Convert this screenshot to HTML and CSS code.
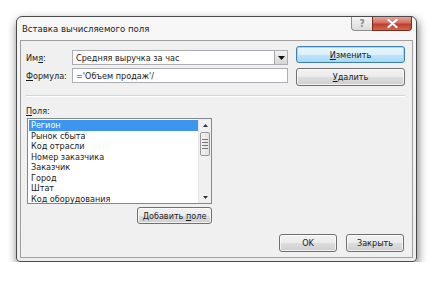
FILE: index.html
```html
<!DOCTYPE html>
<html lang="ru">
<head>
    <meta charset="UTF-8">
    <title>Вставка вычисляемого поля</title>
    <link rel="stylesheet" href="styles.css">
</head>
<body>
    <div class="window">

        <div class="titlebar">
            <span class="title">Вставка вычисляемого поля</span>
            <div class="caption-buttons">
                <span class="help">?</span>
                <span class="close">
                    <svg width="11" height="9" viewBox="0 0 11 9">
                        <path d="M1.5 1 L9.5 8 M9.5 1 L1.5 8" stroke="#fff" stroke-width="2.2" stroke-linecap="round"/>
                    </svg>
                </span>
            </div>
        </div>

        <div class="content">
            <div class="top">
                <div class="fields">
                    <div class="row">
                        <label>Им<u>я</u>:</label>
                        <div class="input combo">
                            <span>Средняя выручка за час</span>
                            <span class="drop">
                                <svg width="7" height="4" viewBox="0 0 7 4"><path d="M0 0 H7 L3.5 4 Z" fill="#111"/></svg>
                            </span>
                        </div>
                    </div>
                    <div class="row">
                        <label><u>Ф</u>ормула:</label>
                        <div class="input">='Объем продаж'/</div>
                    </div>
                </div>
                <div class="side-buttons">
                    <button class="btn default"><u>И</u>зменить</button>
                    <button class="btn tall"><u>У</u>далить</button>
                </div>
            </div>

            <div class="separator"></div>

            <div class="fields-label"><u>П</u>оля:</div>
            <div class="list-wrap">
                <div class="listbox">
                    <ul class="items">
                        <li class="selected">Регион</li>
                        <li>Рынок сбыта</li>
                        <li>Код отрасли</li>
                        <li>Номер заказчика</li>
                        <li>Заказчик</li>
                        <li>Город</li>
                        <li>Штат</li>
                        <li>Код оборудования</li>
                    </ul>
                    <div class="scrollbar">
                        <span class="arrow">
                            <svg width="5" height="3" viewBox="0 0 5 3"><path d="M0 3 H5 L2.5 0 Z" fill="#333"/></svg>
                        </span>
                        <span class="thumb"><i></i><i></i><i></i><i></i></span>
                        <span class="track"></span>
                        <span class="arrow">
                            <svg width="5" height="3" viewBox="0 0 5 3"><path d="M0 0 H5 L2.5 3 Z" fill="#333"/></svg>
                        </span>
                    </div>
                </div>
                <button class="btn add">Добавить <u>п</u>оле</button>
            </div>

            <div class="footer">
                <button class="btn">OK</button>
                <button class="btn">Закрыть</button>
            </div>
        </div>

    </div>
</body>
</html>
```

FILE: styles.css
```css
* {
    box-sizing: border-box;
}
body {
    margin: 0;
    background-color: #ffffff;
    font-family: "DejaVu Sans Condensed", "DejaVu Sans", sans-serif;
    font-stretch: condensed;
    font-size: 9px;
    color: #1a1a1a;
}

.window {
    width: 401px;
    height: 246px;
    margin-left: 16px;
    margin-top: 16px;
    border: 1px solid #4a4a4a;
    border-radius: 6px 6px 4px 4px;
    background: linear-gradient(#f7f7f7, #ededed);
    box-shadow: 1px 4px 10px rgba(0, 0, 0, 0.55);
    display: flex;
    flex-direction: column;
}

.titlebar {
    height: 23px;
    display: flex;
    justify-content: space-between;
    align-items: flex-start;
}

.title {
    font-size: 9.5px;
    color: #222;
    margin-left: 5px;
    margin-top: 6px;
}

.caption-buttons {
    display: flex;
    margin-right: 4px;
}

.help, .close {
    height: 14px;
    display: flex;
    align-items: center;
    justify-content: center;
    border: 1px solid #8d8d8d;
    border-top: none;
}
.help {
    width: 21px;
    border-radius: 0 0 0 4px;
    border-right: none;
    background: linear-gradient(#f4f4f4, #dcdcdc);
    color: #8a8a8a;
    font-size: 10px;
    font-weight: bold;
}
.close {
    width: 40px;
    border-color: #7a2a20;
    border-radius: 0 0 4px 0;
    background: linear-gradient(#e8a596, #d0705f 45%, #bd3e2a 55%, #cf6a50);
}

.content {
    flex: 1;
    margin: 0 3px 3px 3px;
    border: 1px solid #a0a0a0;
    background-color: #f0f0f0;
    padding: 5px 7px 0 5px;
}

.top {
    display: flex;
    justify-content: space-between;
}

.fields {
    margin-top: 4px;
    display: flex;
    flex-direction: column;
    gap: 3px;
}

.row {
    display: flex;
    align-items: center;
}

.row label {
    width: 46px;
}

.input {
    width: 216px;
    height: 15px;
    border: 1px solid #abadb3;
    background-color: #fff;
    padding-left: 3px;
    display: flex;
    align-items: center;
}

.combo {
    justify-content: space-between;
    padding-right: 0;
}

.drop {
    width: 13px;
    height: 13px;
    border-left: 1px solid #a7a7a7;
    background: linear-gradient(#f2f2f2, #d6d6d6);
    display: flex;
    align-items: center;
    justify-content: center;
}

.side-buttons {
    display: flex;
    flex-direction: column;
    gap: 5px;
}

.btn {
    font-family: "DejaVu Sans Condensed", "DejaVu Sans", sans-serif;
    font-stretch: condensed;
    font-size: 9px;
    color: #1a1a1a;
    height: 18px;
    padding: 0;
    border: 1px solid #707070;
    border-radius: 3px;
    background: linear-gradient(#f2f2f2, #ebebeb 50%, #dddddd 51%, #cfcfcf);
    box-shadow: inset 0 0 0 1px rgba(255, 255, 255, 0.7);
}

.side-buttons .btn {
    width: 109px;
}

.btn.default {
    height: 17px;
    border-color: #3c7fb1;
    background: linear-gradient(#eaf6fd, #d9f0fc 50%, #bee6fd 51%, #a7d9f5);
    box-shadow: inset 0 0 0 1px #8ce4f9;
}

.separator {
    height: 1px;
    margin: 9px 0 0 0;
    border-top: 1px solid #d5d5d5;
    border-bottom: 1px solid #ffffff;
}

.fields-label {
    margin-top: 8px;
    height: 12px;
    line-height: 12px;
}

.list-wrap {
    width: 185px;
    margin-top: 1px;
    margin-left: 1px;
    display: flex;
    flex-direction: column;
    align-items: flex-end;
}

.listbox {
    width: 185px;
    height: 86px;
    border: 1px solid #828790;
    background-color: #fff;
    display: flex;
}

.items {
    flex: 1;
    list-style: none;
    margin: 0;
    padding: 1px 0 0 1px;
}

.items li {
    height: 10.5px;
    line-height: 10.5px;
    padding-left: 2px;
}

.items li.selected {
    background-color: #3d95ef;
    color: #fff;
}

.scrollbar {
    width: 13px;
    border-left: 1px solid #e6e6e6;
    background-color: #f0f0f0;
    display: flex;
    flex-direction: column;
}

.arrow {
    height: 12px;
    display: flex;
    align-items: center;
    justify-content: center;
}

.thumb {
    height: 24px;
    margin: 1px 1px;
    border: 1px solid #979797;
    border-radius: 2px;
    background: linear-gradient(90deg, #f3f3f3, #e2e2e2);
    display: flex;
    flex-direction: column;
    align-items: center;
    justify-content: center;
    gap: 2px;
}

.thumb i {
    width: 6px;
    height: 1px;
    background-color: #777;
}

.track {
    flex: 1;
}

.btn.add {
    width: 75px;
    height: 17px;
    margin-top: 3px;
}

.footer {
    margin-top: 10px;
    display: flex;
    justify-content: flex-end;
    gap: 9px;
    padding-right: 1px;
}

.footer .btn {
    width: 58px;
}
```
